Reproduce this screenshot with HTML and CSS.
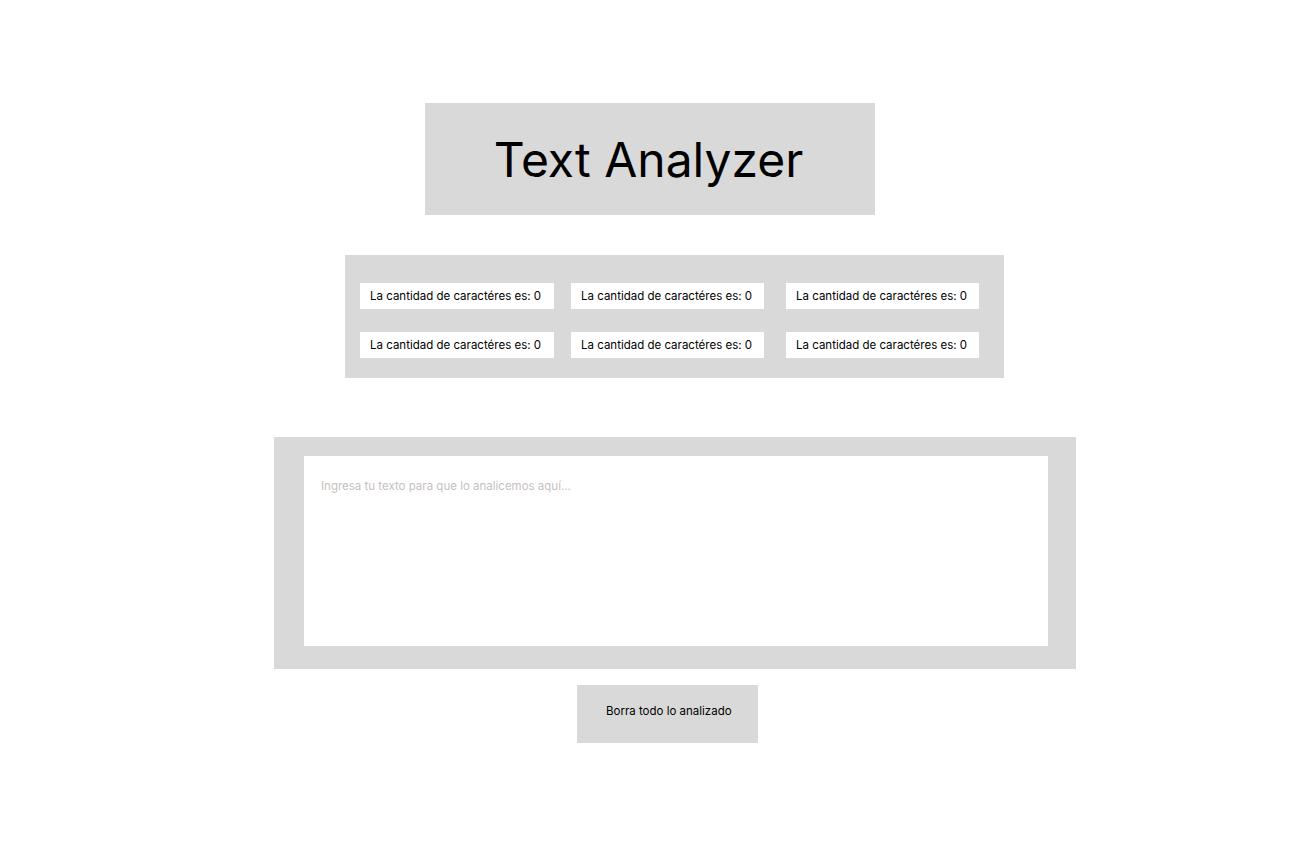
FILE: index.html
```html
<!DOCTYPE html>
<html lang="es">
<head>
<meta charset="utf-8">
<title>Text Analyzer</title>
<link rel="stylesheet" href="styles.css">
</head>
<body>
<main class="page">
  <header class="title-box">
    <h1 class="title">Text Analyzer</h1>
  </header>
  <section class="stats">
    <div class="stat">La cantidad de caractéres es: 0</div>
    <div class="stat">La cantidad de caractéres es: 0</div>
    <div class="stat">La cantidad de caractéres es: 0</div>
    <div class="stat">La cantidad de caractéres es: 0</div>
    <div class="stat">La cantidad de caractéres es: 0</div>
    <div class="stat">La cantidad de caractéres es: 0</div>
  </section>
  <section class="input-box">
    <textarea class="input" placeholder="Ingresa tu texto para que lo analicemos aquí..."></textarea>
  </section>
  <button class="clear-btn" type="button">Borra todo lo analizado</button>
</main>
</body>
</html>
```

FILE: styles.css
```css
html, body {
  margin: 0;
  padding: 0;
  background: #ffffff;
}

body {
  font-family: Inter, "Noto Sans", sans-serif;
  color: #000;
}

.page {
  display: flex;
  flex-direction: column;
  align-items: flex-start;
  padding-top: 103px;
}

.title-box {
  margin-left: 425px;
  width: 450px;
  height: 112px;
  background: #d9d9d9;
  display: flex;
  align-items: center;
  justify-content: center;
}

.title {
  margin: 0;
  font-size: 48px;
  font-weight: 400;
  line-height: 1;
  padding-top: 2px;
  padding-right: 3px;
}

.stats {
  margin-top: 40px;
  margin-left: 345px;
  width: 659px;
  height: 123px;
  box-sizing: border-box;
  background: #d9d9d9;
  padding: 28px 0 0 15px;
  display: grid;
  grid-template-columns: 211px 215px 194px;
  grid-auto-rows: 26px;
  row-gap: 23px;
  align-content: start;
}

.stat {
  width: 193px;
  height: 26px;
  box-sizing: border-box;
  background: #ffffff;
  font-size: 11.5px;
  line-height: 26px;
  padding-left: 10px;
  white-space: nowrap;
}

.stat:nth-child(3n+1) {
  width: 194px;
}

.input-box {
  margin-top: 59px;
  margin-left: 274px;
  width: 802px;
  height: 232px;
  box-sizing: border-box;
  background: #d9d9d9;
  padding: 19px 28px 23px 30px;
  display: flex;
}

.input {
  flex: 1;
  border: none;
  outline: none;
  resize: none;
  margin: 0;
  background: #ffffff;
  padding: 23px 17px;
  font-family: Inter, "Noto Sans", sans-serif;
  font-size: 11.5px;
  line-height: 15px;
  color: #000;
}

.input::placeholder {
  color: #c6bfbf;
}

.clear-btn {
  margin-top: 16px;
  margin-left: 577px;
  width: 181px;
  height: 58px;
  border: none;
  background: #d9d9d9;
  font-family: Inter, "Noto Sans", sans-serif;
  font-size: 11.5px;
  line-height: 15px;
  color: #000;
  padding: 19px 0 0 29px;
  text-align: left;
  display: flex;
  align-items: flex-start;
  cursor: pointer;
}
```
